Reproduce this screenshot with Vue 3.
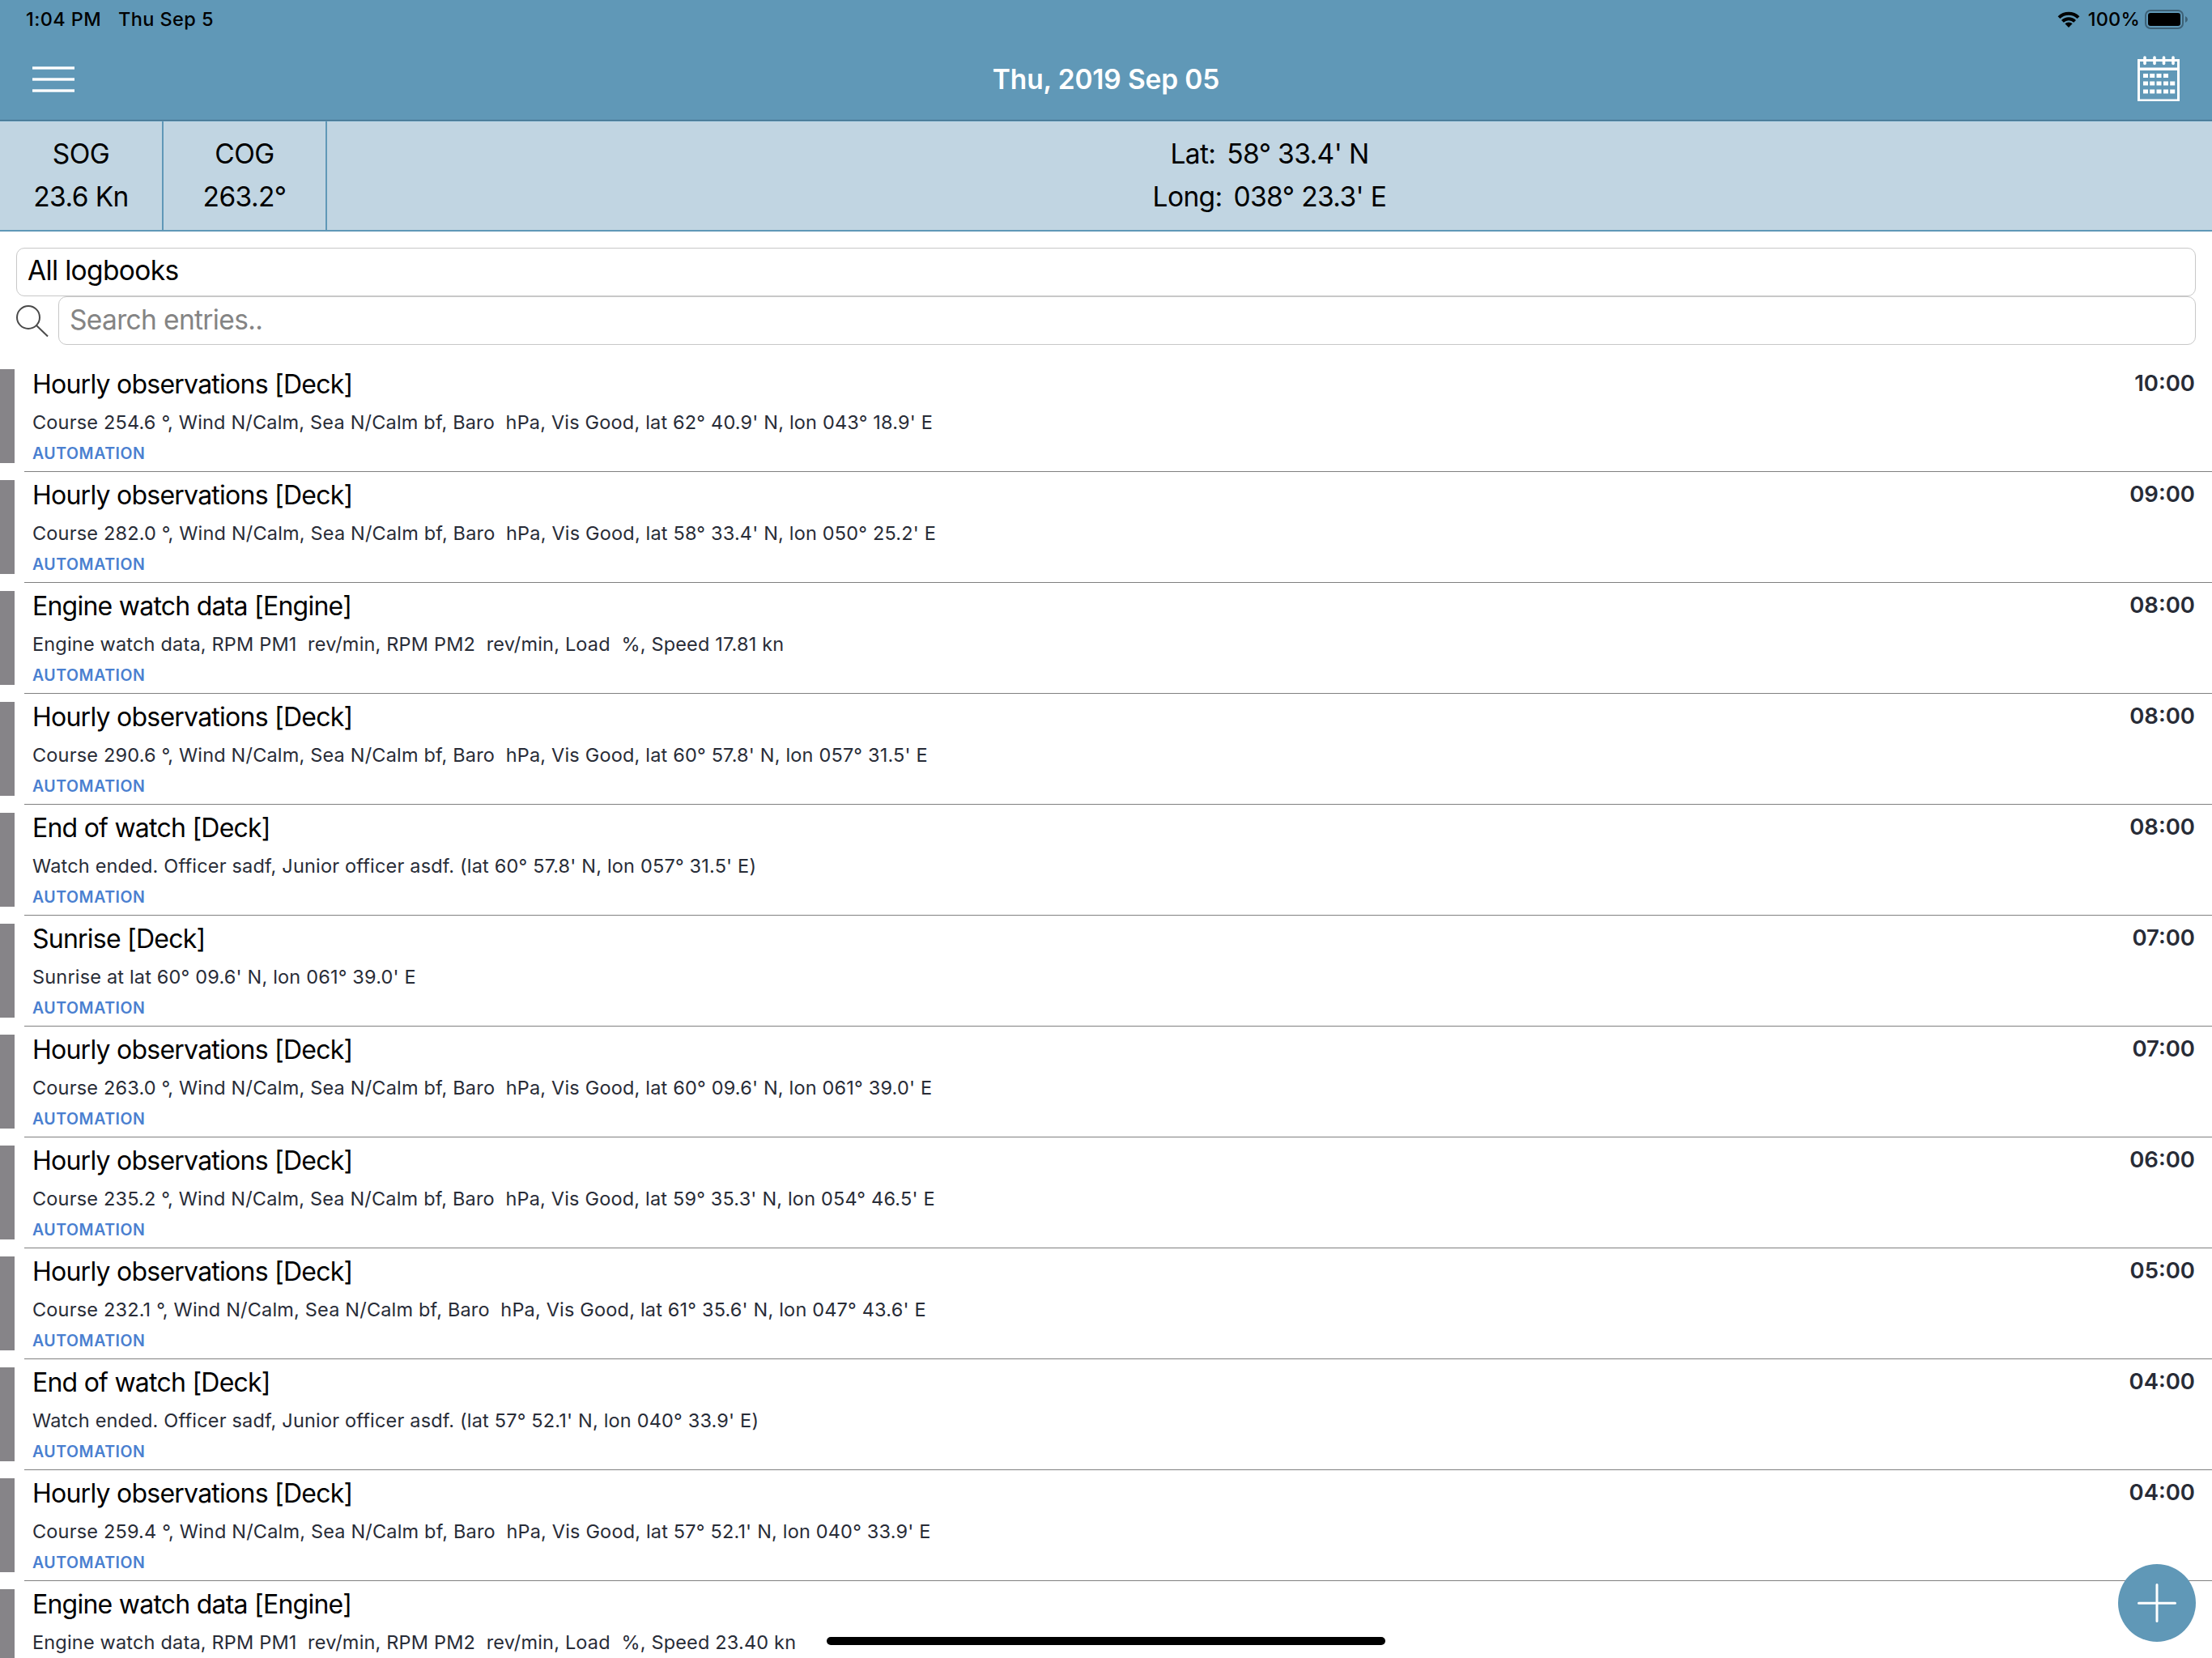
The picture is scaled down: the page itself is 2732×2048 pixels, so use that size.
<template>
  <div class="app">
    <header class="header">
      <div class="status">
        <span class="clock">1:04 PM</span>
        <span class="day">Thu Sep 5</span>
        <svg class="wifi" width="28" height="20" viewBox="0 0 28 20">
          <path d="M0.6 6.2a19 19 0 0 1 26.8 0l-2.8 2.9a15 15 0 0 0-21.2 0z" />
          <path d="M5 10.9a12.8 12.8 0 0 1 18 0l-2.8 2.9a8.8 8.8 0 0 0-12.4 0z" />
          <path d="M9.4 15.3a6.6 6.6 0 0 1 9.2 0L14 20z" />
        </svg>
        <span class="percent">100%</span>
        <svg class="battery" width="54" height="24" viewBox="0 0 54 24">
          <rect x="1" y="1" width="46" height="22" rx="6" fill="none" stroke="#3d6176" stroke-width="2" />
          <rect x="4" y="4" width="40" height="16" rx="3" />
          <path d="M50 8q3 1.300 3 4t-3 4z" fill="#3d6176" />
        </svg>
      </div>

      <div class="navbar">
        <button class="menu" type="button" aria-label="Menu">
          <span v-for="n in 3" :key="n" class="menu-line" />
        </button>
        <h1 class="date">Thu, 2019 Sep 05</h1>
        <svg class="calendar" width="52" height="56" viewBox="0 0 52 56">
          <path d="M0 4h52v52H0zM3 7v7.500h46V7zM3 18v35.500h46V18z" fill="#fff" fill-rule="evenodd" />
          <g v-for="x in rings" :key="x">
            <rect :x="x - 3" y="7" width="6" height="3" fill="#6098b7" />
            <path :d="`M${x} 2v7.500`" stroke="#fff" stroke-width="3.600" stroke-linecap="round" />
          </g>
          <rect
            v-for="cell in cells"
            :key="`${cell.x}-${cell.y}`"
            :x="cell.x"
            :y="cell.y"
            width="6"
            height="5"
            fill="#fff"
          />
        </svg>
      </div>
    </header>

    <section class="readings">
      <div class="reading">
        <span>SOG</span>
        <span>23.6 Kn</span>
      </div>
      <div class="reading">
        <span>COG</span>
        <span>263.2°</span>
      </div>
      <div class="reading position">
        <span>Lat: <span class="coord">58° 33.4' N</span></span>
        <span>Long: <span class="coord">038° 23.3' E</span></span>
      </div>
    </section>

    <section class="filters">
      <div class="field">All logbooks</div>
      <div class="search">
        <svg class="search-icon" width="40" height="40" viewBox="0 0 40 40">
          <circle cx="15" cy="15" r="14" />
          <path d="M25 25L39 38.500" />
        </svg>
        <div class="field placeholder">Search entries..</div>
      </div>
    </section>

    <ul class="entries">
      <li v-for="(entry, i) of entries" :key="i" class="entry">
        <span class="marker" />
        <div class="body">
          <div class="text">
            <h2 class="title">{{ entry.title }}</h2>
            <p class="details">{{ entry.details }}</p>
            <span v-if="entry.time" class="source">AUTOMATION</span>
          </div>
          <time v-if="entry.time" class="time">{{ entry.time }}</time>
        </div>
      </li>
    </ul>

    <button class="add" type="button" aria-label="Add entry">
      <svg width="48" height="48" viewBox="0 0 48 48">
        <path d="M1.500 24.300h45M24 1.500v45" />
      </svg>
    </button>
    <div class="home-indicator" />
  </div>
</template>

<script setup>
const rings = [9, 21, 32.5, 44]

const cells = [22, 31.5, 41.5].flatMap((y, row) =>
  [7, 15.2, 23.5, 32, 40.2].slice(0, row === 0 ? 4 : 5).map((x) => ({ x, y }))
)

const deck = (time, course, lat, lon) => ({
  title: 'Hourly observations [Deck]',
  details: `Course ${course} °, Wind N/Calm, Sea N/Calm bf, Baro  hPa, Vis Good, lat ${lat} N, lon ${lon} E`,
  time
})

const engine = (time, speed) => ({
  title: 'Engine watch data [Engine]',
  details: `Engine watch data, RPM PM1  rev/min, RPM PM2  rev/min, Load  %, Speed ${speed} kn`,
  time
})

const endOfWatch = (time, lat, lon) => ({
  title: 'End of watch [Deck]',
  details: `Watch ended. Officer sadf, Junior officer asdf. (lat ${lat} N, lon ${lon} E)`,
  time
})

const entries = [
  deck('10:00', '254.6', "62° 40.9'", "043° 18.9'"),
  deck('09:00', '282.0', "58° 33.4'", "050° 25.2'"),
  engine('08:00', '17.81'),
  deck('08:00', '290.6', "60° 57.8'", "057° 31.5'"),
  endOfWatch('08:00', "60° 57.8'", "057° 31.5'"),
  {
    title: 'Sunrise [Deck]',
    details: "Sunrise at lat 60° 09.6' N, lon 061° 39.0' E",
    time: '07:00'
  },
  deck('07:00', '263.0', "60° 09.6'", "061° 39.0'"),
  deck('06:00', '235.2', "59° 35.3'", "054° 46.5'"),
  deck('05:00', '232.1', "61° 35.6'", "047° 43.6'"),
  endOfWatch('04:00', "57° 52.1'", "040° 33.9'"),
  deck('04:00', '259.4', "57° 52.1'", "040° 33.9'"),
  engine('', '23.40')
]
</script>

<style>
body {
  margin: 0;
  background: #fff;
}
</style>

<style scoped>
* {
  box-sizing: border-box;
}
.app {
  position: relative;
  width: 2732px;
  height: 2048px;
  overflow: hidden;
  background: #fff;
  color: #000;
  font-family: 'Inter', 'Liberation Sans', sans-serif;
}
button {
  padding: 0;
  border: none;
  background: none;
}

/* header */
.header {
  height: 150px;
  background: #6098b7;
  border-bottom: 1px solid #6098b7;
  box-shadow: inset 0 -1px #42708b;
}
.status {
  display: flex;
  align-items: center;
  height: 48px;
  padding: 0 29px 0 32px;
  font-size: 23.5px;
  font-weight: 500;
  line-height: 48px;
}
.clock {
  letter-spacing: 0.4px;
}
.day {
  margin-left: 21px;
  letter-spacing: 0.4px;
}
.wifi {
  margin-left: auto;
}
.percent {
  margin-left: 10px;
  letter-spacing: 0.2px;
}
.battery {
  margin-left: 6px;
}
.navbar {
  display: flex;
  align-items: center;
  justify-content: space-between;
  height: 100px;
  padding: 0 40px;
}
.menu {
  display: flex;
  flex-direction: column;
  gap: 10px;
  width: 52px;
}
.menu-line {
  height: 4px;
  background: linear-gradient(#cfe0ea 25%, #fff 25%, #fff 75%, #cfe0ea 75%);
}
.date {
  margin: 0;
  color: #fff;
  font-size: 33.5px;
  font-weight: 600;
  letter-spacing: -0.15px;
}
.calendar {
  margin-bottom: 2px;
}

/* readings */
.readings {
  display: flex;
  height: 136px;
  background: #c1d5e2;
  border-bottom: 2px solid #6098b7;
}
.reading {
  display: flex;
  flex-direction: column;
  width: 202px;
  padding-top: 14px;
  border-right: 2px solid #6098b7;
  font-size: 33.5px;
  letter-spacing: -0.6px;
  line-height: 53px;
  text-align: center;
}
.position {
  flex: 1;
  border-right: none;
}
.coord {
  margin-left: 5px;
}

/* filters */
.filters {
  padding: 20px;
}
.field {
  flex: 1;
  height: 60px;
  padding: 0 13px;
  border: 1px solid #c8c8c8;
  border-radius: 10px;
  font-size: 33.5px;
  letter-spacing: -0.65px;
  line-height: 54px;
}
.search {
  display: flex;
}
.search-icon {
  margin: 11px 12px 0 0;
  fill: none;
  stroke: #4a4a4a;
  stroke-width: 2;
}
.placeholder {
  color: #848484;
  line-height: 56px;
}

/* entries */
.entries {
  margin: 0;
  padding: 0;
  list-style: none;
}
.entry {
  display: flex;
  height: 137px;
}
.marker {
  width: 18px;
  height: 116px;
  margin: 10px 12px 0 0;
  background: #868488;
}
.body {
  display: flex;
  flex: 1;
  justify-content: space-between;
  padding: 8px 21px 0 10px;
  border-bottom: 1px solid #808080;
}
.title {
  margin: 0;
  font-size: 32px;
  font-weight: 400;
  letter-spacing: -0.76px;
  line-height: 41px;
}
.details {
  margin: 6px 0 1px;
  color: #282c37;
  font-size: 23.5px;
  letter-spacing: 0.18px;
  line-height: 41px;
  white-space: pre;
}
.source {
  display: block;
  color: #4a7fd0;
  font-size: 19.5px;
  font-weight: 600;
  letter-spacing: 0.55px;
  line-height: 34px;
}
.time {
  color: #282c37;
  font-size: 27.5px;
  font-weight: 600;
  line-height: 38px;
}

/* overlays */
.add {
  position: absolute;
  right: 20px;
  bottom: 20px;
  display: flex;
  align-items: center;
  justify-content: center;
  width: 96px;
  height: 96px;
  border-radius: 50%;
  background: #6098b7;
}
.add path {
  fill: none;
  stroke: #fff;
  stroke-width: 3;
  stroke-linecap: round;
}
.home-indicator {
  position: absolute;
  bottom: 16px;
  left: 1021px;
  width: 690px;
  height: 10px;
  border-radius: 5px;
  background: #000;
}
</style>
